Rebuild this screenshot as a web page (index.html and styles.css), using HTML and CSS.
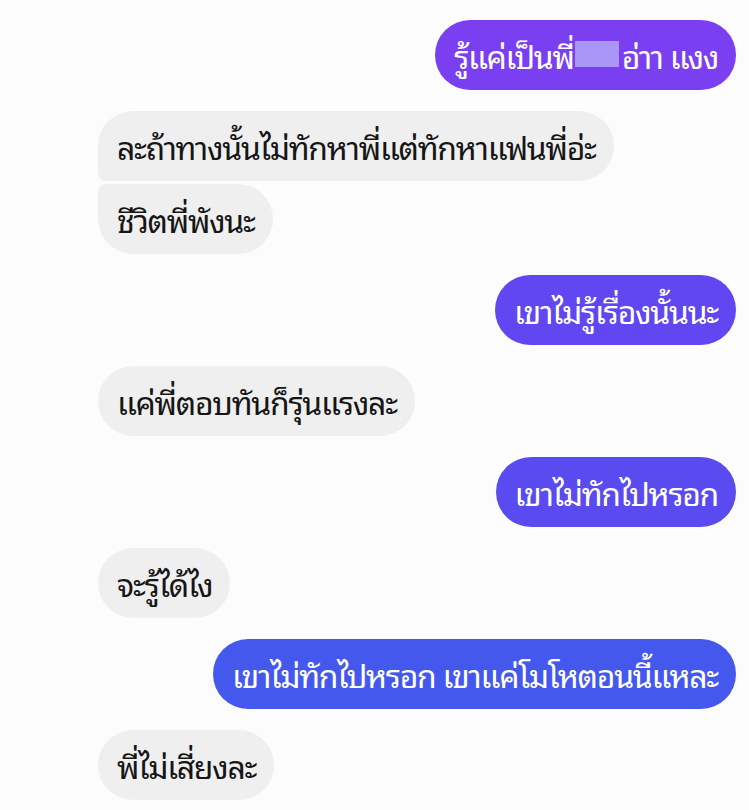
FILE: index.html
```html
<!DOCTYPE html>
<html lang="th">
<head>
<meta charset="utf-8">
<link rel="stylesheet" href="styles.css">
</head>
<body>
<main class="chat">
  <div class="msg sent c1">รู้แค่เป็นพี่<span class="blur"></span>อ่าา แงง</div>
  <div class="group">
    <div class="msg recv first">ละถ้าทางนั้นไม่ทักหาพี่แต่ทักหาแฟนพี่อ่ะ</div>
    <div class="msg recv last">ชีวิตพี่พังนะ</div>
  </div>
  <div class="msg sent c2">เขาไม่รู้เรื่องนั้นนะ</div>
  <div class="msg recv">แค่พี่ตอบทันก็รุ่นแรงละ</div>
  <div class="msg sent c3">เขาไม่ทักไปหรอก</div>
  <div class="msg recv">จะรู้ได้ไง</div>
  <div class="msg sent c4">เขาไม่ทักไปหรอก เขาแค่โมโหตอนนี้แหละ</div>
  <div class="msg recv">พี่ไม่เสี่ยงละ</div>
</main>
</body>
</html>
```
FILE: styles.css
```css
html, body {
  margin: 0;
  padding: 0;
  background: #fcfcfc;
}
.chat {
  display: flex;
  flex-direction: column;
  gap: 21px;
  padding: 20px 13px 0 98px;
  font-family: "Noto Sans Thai Looped", "Noto Sans Thai", "Noto Sans", sans-serif;
}
.group {
  display: flex;
  flex-direction: column;
  gap: 3px;
  align-items: flex-start;
}
.msg {
  box-sizing: border-box;
  height: 70px;
  display: flex;
  align-items: center;
  padding: 0 18px 2px 19px;
  border-radius: 35px;
  font-size: 32px;
  letter-spacing: -1.3px;
  white-space: nowrap;
}
.sent {
  align-self: flex-end;
  color: #ffffff;
}
.recv {
  align-self: flex-start;
  background: #efefef;
  color: #161616;
}
.recv.first { border-bottom-left-radius: 8px; }
.recv.last { border-top-left-radius: 8px; }
.c1 { background: #7b3ff2; }
.c2 { background: #6147f1; }
.c3 { background: #5a4bf0; }
.c4 { background: #4558ee; }
.blur {
  display: inline-block;
  width: 44px;
  height: 26px;
  background: #a996f6;
  margin: 0 3px 0 1px;
}
```
